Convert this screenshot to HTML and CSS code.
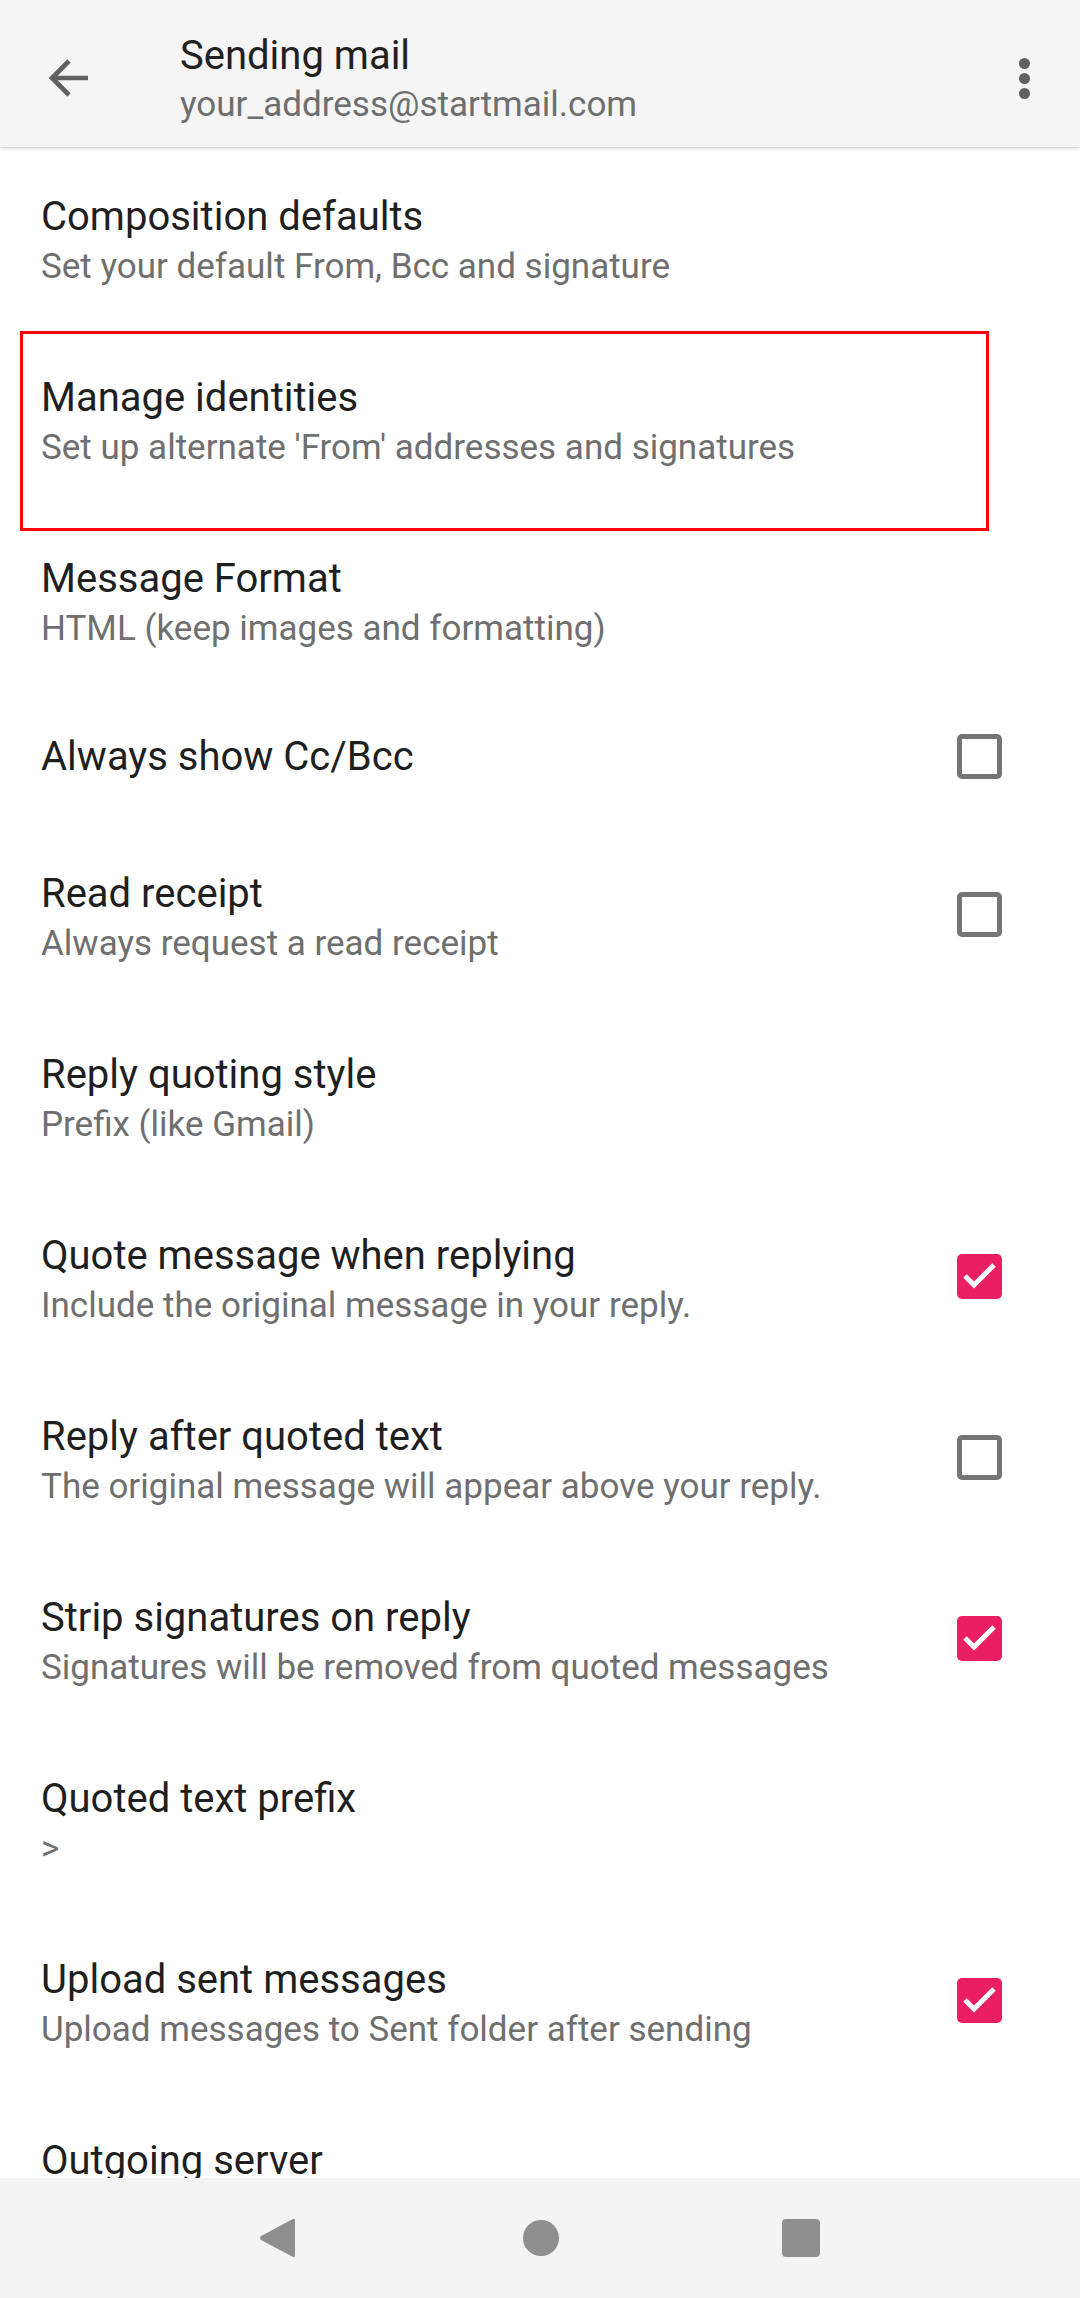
FILE: index.html
```html
<!DOCTYPE html>
<html lang="en">
<head>
    <meta charset="UTF-8">
    <meta name="viewport" content="width=device-width, initial-scale=1.0">
    <title>Sending mail</title>
    <link rel="stylesheet" href="styles.css">
</head>
<body>
    <header class="toolbar">
        <button class="icon-btn back-btn" aria-label="Back">
            <svg width="42" height="42" viewBox="0 0 42 42">
                <path d="M40 21H6M21 4L4 21l17 17" fill="none" stroke="#606060" stroke-width="4.6"/>
            </svg>
        </button>
        <div class="toolbar-text">
            <h1 class="toolbar-title">Sending mail</h1>
            <p class="toolbar-subtitle">your_address@startmail.com</p>
        </div>
        <button class="icon-btn menu-btn" aria-label="More options">
            <span class="dot"></span>
            <span class="dot"></span>
            <span class="dot"></span>
        </button>
    </header>

    <main class="list">
        <div class="pref">
            <div class="pref-text">
                <div class="pref-title">Composition defaults</div>
                <div class="pref-summary">Set your default From, Bcc and signature</div>
            </div>
        </div>

        <div class="pref">
            <div class="pref-text">
                <div class="pref-title">Manage identities</div>
                <div class="pref-summary">Set up alternate 'From' addresses and signatures</div>
            </div>
            <!-- annotation box from the screenshot -->
            <div class="highlight-box"></div>
        </div>

        <div class="pref">
            <div class="pref-text">
                <div class="pref-title">Message Format</div>
                <div class="pref-summary">HTML (keep images and formatting)</div>
            </div>
        </div>

        <div class="pref single">
            <div class="pref-text">
                <div class="pref-title">Always show Cc/Bcc</div>
            </div>
            <span class="checkbox"></span>
        </div>

        <div class="pref">
            <div class="pref-text">
                <div class="pref-title">Read receipt</div>
                <div class="pref-summary">Always request a read receipt</div>
            </div>
            <span class="checkbox"></span>
        </div>

        <div class="pref">
            <div class="pref-text">
                <div class="pref-title">Reply quoting style</div>
                <div class="pref-summary">Prefix (like Gmail)</div>
            </div>
        </div>

        <div class="pref">
            <div class="pref-text">
                <div class="pref-title">Quote message when replying</div>
                <div class="pref-summary">Include the original message in your reply.</div>
            </div>
            <span class="checkbox checked">
                <svg width="45" height="45" viewBox="0 0 45 45"><polyline points="8,22 17,31 37,11" fill="none" stroke="#fff" stroke-width="5"/></svg>
            </span>
        </div>

        <div class="pref">
            <div class="pref-text">
                <div class="pref-title">Reply after quoted text</div>
                <div class="pref-summary">The original message will appear above your reply.</div>
            </div>
            <span class="checkbox"></span>
        </div>

        <div class="pref">
            <div class="pref-text">
                <div class="pref-title">Strip signatures on reply</div>
                <div class="pref-summary">Signatures will be removed from quoted messages</div>
            </div>
            <span class="checkbox checked">
                <svg width="45" height="45" viewBox="0 0 45 45"><polyline points="8,22 17,31 37,11" fill="none" stroke="#fff" stroke-width="5"/></svg>
            </span>
        </div>

        <div class="pref">
            <div class="pref-text">
                <div class="pref-title">Quoted text prefix</div>
                <div class="pref-summary">&gt;</div>
            </div>
        </div>

        <div class="pref">
            <div class="pref-text">
                <div class="pref-title">Upload sent messages</div>
                <div class="pref-summary">Upload messages to Sent folder after sending</div>
            </div>
            <span class="checkbox checked">
                <svg width="45" height="45" viewBox="0 0 45 45"><polyline points="8,22 17,31 37,11" fill="none" stroke="#fff" stroke-width="5"/></svg>
            </span>
        </div>

        <div class="pref">
            <div class="pref-text">
                <div class="pref-title">Outgoing server</div>
            </div>
        </div>
    </main>

    <nav class="navbar">
        <svg class="nav-back" width="38" height="44" viewBox="0 0 38 44">
            <path d="M35 3 Q37 2 37 5 L37 39 Q37 42 35 41 L3 24 Q1 22 3 20 Z" fill="#8f8f8f"/>
        </svg>
        <span class="nav-home"></span>
        <span class="nav-recents"></span>
    </nav>
</body>
</html>
```

FILE: styles.css
```css
/* General Styling */
* {
    margin: 0;
    padding: 0;
    box-sizing: border-box;
}

body {
    font-family: Roboto, "Noto Sans", sans-serif;
    background: #fff;
    height: 100vh;
    display: flex;
    flex-direction: column;
    overflow: hidden;
    color: #212121;
}

/* Toolbar */
.toolbar {
    height: 147px;
    flex-shrink: 0;
    display: flex;
    align-items: center;
    background: #f5f5f5;
    box-shadow: 0 2px 4px rgba(0, 0, 0, 0.12), 0 1px 1px rgba(0, 0, 0, 0.06);
    position: relative;
    z-index: 2;
}

.icon-btn {
    border: none;
    background: none;
    display: flex;
    align-items: center;
    justify-content: center;
}

.back-btn {
    width: 42px;
    height: 42px;
    margin-left: 48px;
    margin-top: 9px;
}

.toolbar-text {
    flex: 1;
    margin-left: 90px;
    margin-top: 11px;
}

.toolbar-title {
    font-size: 40px;
    font-weight: 400;
    line-height: 52px;
    color: #212121;
}

.toolbar-subtitle {
    font-size: 35px;
    line-height: 46px;
    color: #6e6e6e;
}

.menu-btn {
    flex-direction: column;
    gap: 4px;
    width: 40px;
    margin-right: 36px;
    margin-top: 9px;
}

.dot {
    width: 11px;
    height: 11px;
    border-radius: 50%;
    background: #606060;
}

/* Preference list */
.list {
    flex: 1;
    overflow: hidden;
}

.pref {
    height: 181px;
    padding: 42px 78px 0 41px;
    display: flex;
    align-items: flex-start;
    position: relative;
}

.pref.single {
    height: 134px;
    padding-top: 39px;
}

.pref-text {
    flex: 1;
}

.pref-title {
    font-size: 40px;
    line-height: 56px;
    color: #1f1f1f;
}

.pref-summary {
    font-size: 35px;
    line-height: 44px;
    color: #6f6f6f;
}

.checkbox {
    width: 45px;
    height: 45px;
    margin-top: 26px;
    border: 5px solid #757575;
    border-radius: 5px;
    flex-shrink: 0;
    display: flex;
    align-items: center;
    justify-content: center;
}

.pref.single .checkbox {
    margin-top: 5px;
}

.checkbox.checked {
    border: none;
    background: #e91e63;
}

.highlight-box {
    position: absolute;
    left: 20px;
    top: 3px;
    width: 969px;
    height: 200px;
    border: 3px solid #f00;
}

/* Navigation bar */
.navbar {
    height: 120px;
    flex-shrink: 0;
    background: #f4f4f4;
    display: flex;
    align-items: center;
    justify-content: center;
}

.nav-back {
    margin-right: 227px;
    margin-left: -2px;
}

.nav-home {
    width: 36px;
    height: 36px;
    border-radius: 50%;
    background: #8f8f8f;
}

.nav-recents {
    width: 38px;
    height: 38px;
    margin-left: 223px;
    border-radius: 4px;
    background: #8f8f8f;
}
```
